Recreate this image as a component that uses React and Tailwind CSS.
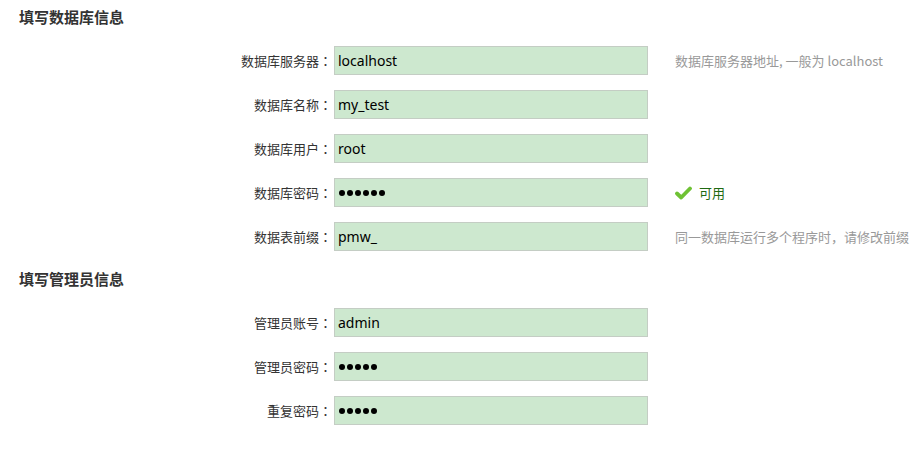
import React from 'react';

function CheckIcon() {
  return (
    <svg width="17" height="14" viewBox="0 0 17 14" className="mr-[7px]">
      <path d="M2 7.5 L6.2 11.5 L15 2.5" fill="none" stroke="#6fc234" strokeWidth="3.8" strokeLinecap="round" strokeLinejoin="round" />
    </svg>
  );
}

// 密码框用圆点显示
function Dots({ n }) {
  return (
    <div className="ml-[2px] w-[314px] h-[29px] border border-[#c4cdc4] bg-[#cde8cf] px-[4px] flex items-center">
      {Array.from({ length: n }).map((_, i) => (
        <span key={i} className="w-[6px] h-[6px] rounded-full bg-black mr-[2px]" />
      ))}
    </div>
  );
}

function Row({ label, value, dots, hint, ok }) {
  return (
    <div className="flex items-center h-[29px] mb-[15px]">
      <div className="w-[332px] flex justify-end text-[13px] text-[#333] whitespace-nowrap font-['Noto_Sans_CJK_SC','Noto_Sans',sans-serif]">
        {label}
        <span className="inline-block w-[13px] text-center font-['Noto_Sans_CJK_TC',sans-serif]">：</span>
      </div>
      {dots ? (
        <Dots n={dots} />
      ) : (
        <input
          readOnly
          type="text"
          value={value}
          className="ml-[2px] w-[314px] h-[29px] border border-[#c4cdc4] bg-[#cde8cf] px-[3px] text-[14px] text-black outline-none font-['Noto_Sans',sans-serif]"
        />
      )}
      {hint && (
        <div className="ml-[27px] text-[13px] text-[#999] whitespace-nowrap font-['Noto_Sans_CJK_SC','Noto_Sans',sans-serif]">{hint}</div>
      )}
      {ok && (
        <div className="ml-[27px] flex items-center text-[13px] text-[#1f6a12] font-['Noto_Sans_CJK_SC',sans-serif]">
          <CheckIcon />
          可用
        </div>
      )}
    </div>
  );
}

function Heading({ children }) {
  return (
    <div className="pl-[19px] h-[18px] leading-[18px] text-[15px] font-bold text-[#333] mb-[20px] font-['Noto_Sans_CJK_SC',sans-serif]">
      {children}
    </div>
  );
}

export default function App() {
  return (
    <div className="w-[920px] h-[455px] bg-white overflow-hidden pt-[8px]">
      <Heading>填写数据库信息</Heading>
      <Row label="数据库服务器" value="localhost" hint="数据库服务器地址, 一般为 localhost" />
      <Row label="数据库名称" value="my_test" />
      <Row label="数据库用户" value="root" />
      <Row label="数据库密码" dots={6} ok />
      <Row label="数据表前缀" value="pmw_" hint="同一数据库运行多个程序时，请修改前缀" />
      <div className="h-[4px]" />
      <Heading>填写管理员信息</Heading>
      <Row label="管理员账号" value="admin" />
      <Row label="管理员密码" dots={5} />
      <Row label="重复密码" dots={5} />
    </div>
  );
}
